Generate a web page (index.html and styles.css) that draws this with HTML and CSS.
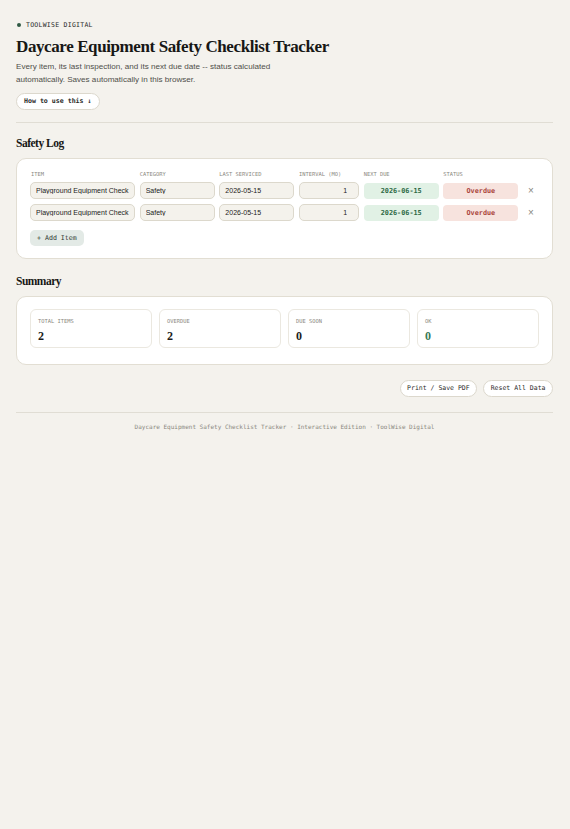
FILE: index.html
```html
<!DOCTYPE html>
<html lang="en">
<head>
<meta charset="utf-8">
<title>Daycare Equipment Safety Checklist Tracker</title>
<link rel="stylesheet" href="styles.css">
</head>
<body>
<main class="page">
  <header class="intro">
    <div class="eyebrow"><span class="dot"></span>TOOLWISE DIGITAL</div>
    <h1 class="title">Daycare Equipment Safety Checklist Tracker</h1>
    <p class="lede">Every item, its last inspection, and its next due date -- status calculated automatically. Saves automatically in this browser.</p>
    <button class="pill pill-bold">How to use this ↓</button>
  </header>

  <hr class="rule">

  <section class="section">
    <h2 class="section-title">Safety Log</h2>
    <div class="card log">
      <div class="grid head">
        <span>ITEM</span><span>CATEGORY</span><span>LAST SERVICED</span><span>INTERVAL (MO)</span><span>NEXT DUE</span><span>STATUS</span><span></span>
      </div>
      <div class="grid row">
        <input class="field" value="Playground Equipment Check">
        <input class="field" value="Safety">
        <input class="field" value="2026-05-15">
        <input class="field num" value="1">
        <span class="chip due">2026-06-15</span>
        <span class="chip overdue">Overdue</span>
        <span class="remove">×</span>
      </div>
      <div class="grid row">
        <input class="field" value="Playground Equipment Check (copy)">
        <input class="field" value="Safety">
        <input class="field" value="2026-05-15">
        <input class="field num" value="1">
        <span class="chip due">2026-06-15</span>
        <span class="chip overdue">Overdue</span>
        <span class="remove">×</span>
      </div>
      <button class="add">+ Add Item</button>
    </div>
  </section>

  <section class="section section-summary">
    <h2 class="section-title">Summary</h2>
    <div class="card summary">
      <div class="stat"><div class="stat-label">TOTAL ITEMS</div><div class="stat-value">2</div></div>
      <div class="stat"><div class="stat-label">OVERDUE</div><div class="stat-value">2</div></div>
      <div class="stat"><div class="stat-label">DUE SOON</div><div class="stat-value">0</div></div>
      <div class="stat"><div class="stat-label">OK</div><div class="stat-value ok">0</div></div>
    </div>
  </section>

  <div class="actions">
    <button class="pill">Print / Save PDF</button>
    <button class="pill">Reset All Data</button>
  </div>

  <hr class="rule rule-bottom">

  <footer class="footer">Daycare Equipment Safety Checklist Tracker · Interactive Edition · ToolWise Digital</footer>
</main>
</body>
</html>
```

FILE: styles.css
```css
* { box-sizing: border-box; }

html, body {
  margin: 0;
  background: #f4f2ed;
}

body {
  font-family: "Liberation Sans", Arial, sans-serif;
  color: #1d1d1b;
}

.page {
  padding: 20px 17px 40px 16px;
}

.intro {
  display: flex;
  flex-direction: column;
  align-items: flex-start;
}

.eyebrow {
  display: flex;
  align-items: center;
  gap: 5px;
  font-family: "DejaVu Sans Mono", monospace;
  font-size: 6.5px;
  letter-spacing: 0.04em;
  color: #2a2a28;
  line-height: 10px;
}

.dot {
  width: 4px;
  height: 4px;
  border-radius: 50%;
  background: #2f5a44;
  margin-left: 1px;
}

.title {
  font-family: "Liberation Serif", "Times New Roman", serif;
  font-weight: 700;
  font-size: 17px;
  letter-spacing: -0.4px;
  line-height: 22px;
  margin: 6px 0 0;
  color: #171715;
}

.lede {
  font-size: 8.1px;
  line-height: 12.5px;
  color: #4f4f4a;
  margin: 3px 0 0;
  max-width: 275px;
}

.pill {
  font-family: "DejaVu Sans Mono", monospace;
  font-size: 6.5px;
  color: #2a2a28;
  background: #fff;
  border: 1px solid #dcd8cd;
  border-radius: 999px;
  padding: 0 6.5px;
  height: 17px;
  line-height: 15px;
  cursor: pointer;
}

.pill-bold {
  font-weight: 700;
  font-size: 6.6px;
  padding: 0 7px;
  margin-top: 7px;
}

.rule {
  border: 0;
  border-top: 1px solid #e0ddd4;
  margin: 12px 0 0;
}

.rule-bottom { margin-top: 15px; }

.section {
  margin-top: 13px;
}

.section-summary { margin-top: 15px; }

.section-title {
  font-family: "Liberation Serif", "Times New Roman", serif;
  font-weight: 700;
  font-size: 11.5px;
  letter-spacing: -0.5px;
  line-height: 14px;
  margin: 0 0 8px;
  color: #171715;
}

.card {
  background: #fff;
  border: 1.5px solid #e2ded3;
  border-radius: 10px;
}

.log {
  padding: 11px 13px 12px;
}

.grid {
  display: grid;
  grid-template-columns: 2.1fr 1.5fr 1.5fr 1.2fr 1.5fr 1.5fr 16px;
  column-gap: 4.6px;
  align-items: center;
}

.head {
  font-family: "DejaVu Sans Mono", monospace;
  font-size: 5.4px;
  color: #8a8880;
  line-height: 8px;
  margin-bottom: 4px;
}

.head span:first-child { padding-left: 1px; }

.row + .row { margin-top: 5px; }

.field {
  width: 100%;
  min-width: 0;
  height: 17px;
  font-family: "Liberation Sans", Arial, sans-serif;
  font-size: 7px;
  color: #222;
  background: #f4f2ec;
  border: 1px solid #dcd8cc;
  border-radius: 5px;
  padding: 0 5px;
}

.field.num {
  text-align: right;
  padding-right: 11px;
}

.chip {
  height: 16px;
  border-radius: 4px;
  display: flex;
  align-items: center;
  justify-content: center;
  font-family: "DejaVu Sans Mono", monospace;
  font-weight: 700;
  font-size: 6.8px;
}

.due {
  background: #e1f1e5;
  color: #2e6a46;
}

.overdue {
  background: #f7e3de;
  color: #ab463c;
}

.remove {
  text-align: center;
  color: #8a8880;
  font-size: 10px;
  line-height: 10px;
}

.add {
  margin-top: 9px;
  font-family: "DejaVu Sans Mono", monospace;
  font-size: 6.6px;
  color: #2d3831;
  background: #e3eae6;
  border: 0;
  border-radius: 5px;
  height: 16px;
  padding: 0 7px;
}

.summary {
  display: grid;
  grid-template-columns: repeat(4, 1fr);
  gap: 7px;
  padding: 12px 13px 16px;
}

.stat {
  border: 1px solid #ebe8e0;
  border-radius: 6px;
  height: 39px;
  padding: 7px 7px 0;
}

.stat-label {
  font-family: "DejaVu Sans Mono", monospace;
  font-size: 5.4px;
  color: #8a8880;
  line-height: 8px;
}

.stat-value {
  font-family: "Liberation Serif", "Times New Roman", serif;
  font-weight: 700;
  font-size: 12px;
  line-height: 14px;
  margin-top: 4px;
  color: #1d1d1b;
}

.stat-value.ok { color: #3b7a58; }

.actions {
  display: flex;
  justify-content: flex-end;
  gap: 6px;
  margin-top: 15px;
}

.footer {
  text-align: center;
  font-family: "DejaVu Sans Mono", monospace;
  font-size: 6px;
  color: #8a8880;
  margin-top: 10px;
}
```
